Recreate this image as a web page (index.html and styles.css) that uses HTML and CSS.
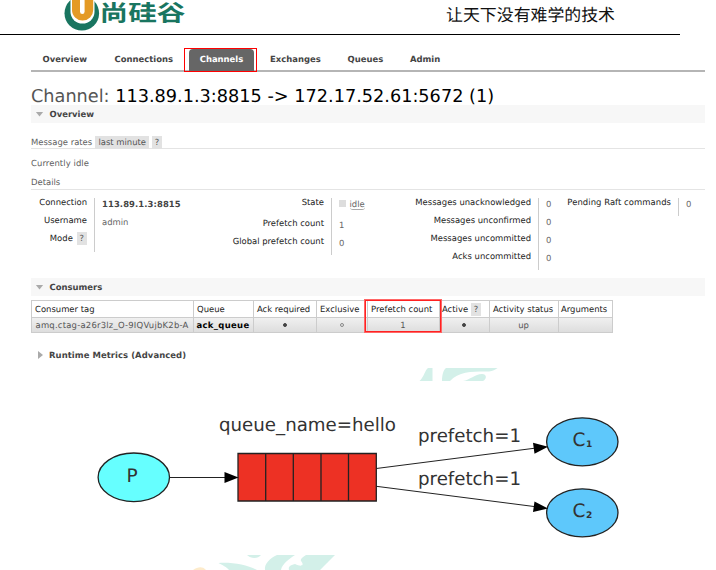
FILE: index.html
```html
<!DOCTYPE html>
<html lang="zh-CN">
<head>
<meta charset="utf-8">
<title>Channel</title>
<link rel="stylesheet" href="styles.css">
</head>
<body>
<header class="page-head">
  <svg class="logo" width="126" height="32" viewBox="0 0 126 32">
    <circle cx="17.800" cy="13.300" r="17.300" fill="#197560"/>
    <path d="M6.500 0V12A12 11.500 0 0 0 30.500 12V0Z" fill="#fff"/>
    <path d="M8 0V10A10.600 10.600 0 0 0 29.200 10V0Z" fill="#e49a25"/>
    <path d="M16 0V11.500A2.300 2.500 0 0 0 20.600 11.500V0Z" fill="#fff"/>
    <text class="logo-name" x="35.500" y="21.300" textLength="86" lengthAdjust="spacingAndGlyphs">尚硅谷</text>
  </svg>
  <div class="slogan">让天下没有难学的技术</div>
</header>

<main class="console">
  <nav class="tabs">
    <a class="tab overview">Overview</a>
    <a class="tab connections">Connections</a>
    <span class="marked"><a class="tab active">Channels</a></span>
    <a class="tab exchanges">Exchanges</a>
    <a class="tab queues">Queues</a>
    <a class="tab">Admin</a>
  </nav>

  <h1>Channel: <b>113.89.1.3:8815 -&gt; 172.17.52.61:5672 (1)</b></h1>
  <h2 class="section"><i class="arrow down"></i>Overview</h2>

  <div class="rates">Message rates <span class="chip minute">last minute</span> <span class="chip">?</span></div>
  <p class="idle-note">Currently idle</p>
  <h3>Details</h3>

  <div class="details">
    <div class="facts first">
      <div class="keys"><span>Connection</span><span>Username</span><span>Mode <em class="chip help">?</em></span></div>
      <div class="values"><strong>113.89.1.3:8815</strong><span>admin</span></div>
    </div>
    <div class="facts second">
      <div class="keys"><span class="state">State</span><span>Prefetch count</span><span>Global prefetch count</span></div>
      <div class="values"><span class="state"><i class="square"></i><abbr>idle</abbr></span><span>1</span><span>0</span></div>
    </div>
    <div class="facts third">
      <div class="keys"><span>Messages unacknowledged</span><span>Messages unconfirmed</span><span>Messages uncommitted</span><span>Acks uncommitted</span></div>
      <div class="values"><span>0</span><span>0</span><span>0</span><span>0</span></div>
    </div>
    <div class="facts fourth">
      <div class="keys"><span>Pending Raft commands</span></div>
      <div class="values"><span>0</span></div>
    </div>
  </div>

  <h2 class="section"><i class="arrow down"></i>Consumers</h2>
  <table>
    <colgroup><col class="c1"><col class="c2"><col class="c3"><col class="c4"><col class="c5"><col class="c6"><col class="c7"><col class="c8"></colgroup>
    <tr><th>Consumer tag</th><th>Queue</th><th>Ack required</th><th>Exclusive</th><th class="prefetch">Prefetch count</th><th class="flag">Active <span class="chip">?</span></th><th>Activity status</th><th class="arguments">Arguments</th></tr>
    <tr class="row"><td class="tag">amq.ctag-a26r3lz_O-9IQVujbK2b-A</td><td class="queue">ack_queue</td><td><i class="dot"></i></td><td><i class="dot ring"></i></td><td>1</td><td><i class="dot"></i></td><td>up</td><td></td></tr>
  </table>
  <h2 class="section closed"><i class="arrow right"></i>Runtime Metrics (Advanced)</h2>
</main>

<svg class="diagram" width="716" height="202" viewBox="0 368 716 202">
  <g fill="#d3f0e9">
    <path d="M419.500 381C424 377 425 370 428 368H432.500V381Z"/>
    <path d="M442 381C442 376 443 370 446 368H497.500C495 370 493 371 489 371.500C474 371.500 459 371 450 381Z"/>
    <path d="M463 381C470 380 475 374 482 374C487 374 487 379 483 381Z"/>
    <path d="M247 555H261C258 559 251 559 247 555Z"/>
    <path d="M218.500 563C232 562 248 565 257 570H229C227 567 222 565 218.500 563Z"/>
    <path d="M277 555H295C289 559 282 564 281 570H265C264 564 270 558 277 555Z"/>
    <path d="M306 555H335L320 570H289C288 567 290 565 295 564C301 567 305 566 301 561C300 559 303 557 306 555Z"/>
  </g>
  <path d="M193 570C198 567 202 566 206 570Z" fill="#fdebcb"/>
  <g stroke="#222" stroke-width="1.300">
    <ellipse cx="133.800" cy="477.300" rx="35.700" ry="24.300" fill="#6ff"/>
    <ellipse cx="582.300" cy="441.800" rx="35.700" ry="24" fill="#5ec8fb"/>
    <ellipse cx="582.300" cy="512.800" rx="35.700" ry="24" fill="#5ec8fb"/>
    <path d="M238 453.500H376.300V501H238ZM265.700 453.500V501M293.300 453.500V501M321 453.500V501M348.500 453.500V501" fill="#ed3124"/>
    <path d="M169.500 477.500H226M376.300 468.500L534 448.300M376.300 486.300L534 506.500" stroke-width="1"/>
  </g>
  <path d="M224.500 472L238.500 477.500L224.500 483ZM533 442.800L548 446.700L534.500 453.700ZM534.500 501.500L548 508.500L533 512Z"/>
  <g class="labels">
    <text x="219" y="431" textLength="177" lengthAdjust="spacingAndGlyphs">queue_name=hello</text>
    <text x="418" y="441.500" textLength="103" lengthAdjust="spacingAndGlyphs">prefetch=1</text>
    <text x="418" y="484.500" textLength="103" lengthAdjust="spacingAndGlyphs">prefetch=1</text>
    <text x="126.500" y="482">P</text>
    <text x="572.500" y="446">C</text><text class="sub" x="586" y="446.500">1</text>
    <text x="572.500" y="517">C</text><text class="sub" x="586" y="517.500">2</text>
  </g>
</svg>
</body>
</html>
```
FILE: styles.css
```css
* { box-sizing: border-box; }
body {
  margin: 0; width: 716px; height: 570px; overflow: hidden; background: #fff;
  font: 8.45px/18px "DejaVu Sans", sans-serif; color: #606060;
  text-rendering: geometricPrecision;
}
h1, h2, h3, p { margin: 0; font-size: inherit; }
i, em { font-style: normal; }

.page-head {
  display: flex; justify-content: space-between; width: 680px; height: 35px;
  padding: 0 65px 0 64px; border-bottom: 1px solid #000;
}
.logo { display: block; overflow: visible; }
.logo-name { font: bold 22.5px "Noto Sans CJK SC", sans-serif; fill: #197560; }
.slogan { font: 16.9px/28px "Noto Sans CJK SC", sans-serif; color: #111; white-space: nowrap; }

.console { width: 674px; margin-left: 31px; height: 333px; }
.tabs {
  display: flex; height: 37px; padding: 13px 0 0 11.500px; border-bottom: 2px solid #b5b5b5;
  font-weight: bold; color: #444; line-height: 23px;
}
.overview { width: 72px; }
.connections { width: 69.500px; }
.marked { width: 73px; height: 24px; padding: 0 2px 0 4px; border: 1px solid #f00; }
.active {
  display: block; height: 22px; line-height: 21px; border-radius: 4px 4px 0 0;
  background: #666; color: #fff; text-align: center;
}
.exchanges { width: 77.500px; margin-left: 13px; }
.queues { width: 62.500px; }

h1 {
  height: 33px; padding-top: 12px; font-size: 17.69px; font-weight: normal;
  line-height: 26px; white-space: nowrap; color: #555;
}
h1 b { font-weight: normal; color: #000; }
.section { display: flex; align-items: center; height: 18px; background: #f7f7f7; font-weight: bold; color: #444; }
.arrow { width: 8px; height: 5px; margin: 0 6px 0 4.500px; background: #aaa; clip-path: polygon(0 0, 100% 0, 50% 100%); }
.arrow.right { width: 5px; height: 8px; margin: 0 6px 0 7px; clip-path: polygon(0 0, 100% 50%, 0 100%); }
.closed { margin-top: 13px; background: none; letter-spacing: .07px; }

.chip { display: inline-block; height: 13px; padding: 0 3px; background: #e2e2e2; line-height: 13px; color: #555; }
.rates { height: 26px; padding-top: 12px; line-height: 14px; border-bottom: 1px solid #e4e4e4; white-space: nowrap; }
.minute { margin-left: .5px; }
.idle-note { height: 27px; padding-top: 5px; letter-spacing: .08px; }
h3 { height: 14px; font-weight: normal; line-height: 13px; border-bottom: 1px solid #e4e4e4; }

.details {
  display: grid; grid-template-columns: 170px 200px 165px 1fr; align-items: start;
  height: 88px; padding-top: 8px; color: #222;
}
.facts { display: flex; }
.keys {
  display: flex; flex-direction: column; flex: none; padding-right: 7px;
  line-height: 9px; text-align: right; white-space: nowrap;
}
.keys span { height: 18px; }
.keys .help { margin: -2px 0 0 1px; }
.first .keys { width: 63px; }
.second .keys { width: 130px; }
.third .keys { width: 137px; }
.fourth .keys { width: 112px; letter-spacing: .05px; }
.values {
  display: flex; flex-direction: column; padding-left: 7px; border-left: 1px solid #ccc;
  line-height: 12px; color: #666;
}
.values > * { height: 18px; }
.values strong { color: #444; letter-spacing: .08px; }
.facts .state { height: 20.500px; }
.square { display: inline-block; width: 7px; height: 7px; margin-right: 3.500px; background: #ddd; }
abbr { border-bottom: 1px solid #aaa; border-radius: 0 0 3px 3px; }

table { width: 581.500px; margin: 4px 0 0 -.5px; border-collapse: collapse; table-layout: fixed; color: #222; }
.c1 { width: 162px; }
.c2 { width: 60px; }
.c3 { width: 63px; }
.c4 { width: 51px; }
.c5 { width: 72px; }
.c6 { width: 50px; }
.c7 { width: 69px; }
.c8 { width: 54.500px; }
th, td { height: 15px; padding: 0; border: 1px solid #ccc; line-height: 14px; text-align: center; white-space: nowrap; }
th { height: 17px; padding-left: 3.500px; font-weight: normal; text-align: left; }
th.flag, th.arguments { padding-left: 2.500px; }
.row { background: linear-gradient(#f0f0f0, #dcdcdc); color: #555; }
.row .tag { padding-left: 4px; text-align: left; letter-spacing: .22px; }
.row .queue { padding-left: 3px; text-align: left; font-weight: bold; color: #000; letter-spacing: .33px; }
.dot { display: inline-block; width: 4px; height: 4px; border: 1px solid #444; border-radius: 50%; background: #444; vertical-align: 1px; }
.ring { border-color: #888; background: none; }
.prefetch { position: relative; z-index: 1; }
.prefetch::after {
  content: ""; position: absolute; left: -3px; top: -1px; box-sizing: border-box;
  width: 76px; height: 32px; border: 1.500px solid #f22; outline: .5px solid #f66;
}

.diagram { display: block; }
.labels { font: 18.5px "DejaVu Sans", sans-serif; fill: #333; }
.labels .sub { font-size: 9px; font-weight: bold; }
```
